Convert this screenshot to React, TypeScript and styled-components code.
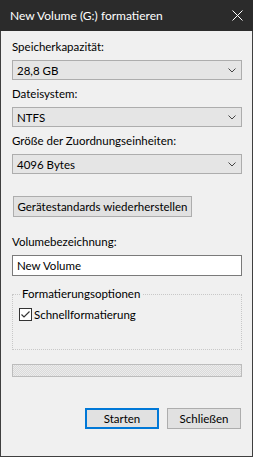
import styled, { createGlobalStyle } from "styled-components";

const GlobalStyle = createGlobalStyle`
  html, body {
    margin: 0;
    padding: 0;
    background: #f0f0f0;
  }
  * {
    box-sizing: border-box;
  }
`;

const Window = styled.div`
  display: flex;
  flex-direction: column;
  width: 253px;
  height: 457px;
  background: #f0f0f0;
  border: 1px solid #3f3f3f;
  border-top: none;
  font-family: "Lato", "Noto Sans", sans-serif;
  font-size: 11.5px;
  color: #000;
`;

const TitleBar = styled.div`
  display: flex;
  align-items: center;
  justify-content: space-between;
  height: 31px;
  margin: 0 -1px;
  padding: 0 10px 1px 10px;
  background: #2b2b2b;
  color: #fff;
  font-size: 12px;
`;

const CloseIcon = styled.svg`
  width: 11px;
  height: 11px;
`;

const Body = styled.div`
  display: flex;
  flex-direction: column;
  padding: 0 10px 0 11px;
`;

const Label = styled.div<{ $top: number }>`
  margin-top: ${(p) => p.$top}px;
  height: 16px;
  line-height: 16px;
  white-space: nowrap;
`;

const Select = styled.div`
  display: flex;
  align-items: center;
  justify-content: space-between;
  margin-top: 5px;
  height: 20px;
  padding: 0 5px 0 4px;
  background: #e5e5e5;
  border: 1px solid #adadad;
`;

const Chevron = styled.svg`
  width: 8px;
  height: 5px;
`;

const Button = styled.div<{ $primary?: boolean }>`
  display: flex;
  align-items: center;
  justify-content: center;
  height: 21px;
  padding: 0 4px;
  background: #e1e1e1;
  border: ${(p) => (p.$primary ? "2px solid #0078d7" : "1px solid #adadad")};
  white-space: nowrap;
`;

const ResetButton = styled(Button)`
  align-self: flex-start;
  margin-top: 22px;
  margin-left: 1px;
  width: 179px;
`;

const TextInput = styled.div`
  display: flex;
  align-items: center;
  margin-top: 5px;
  height: 21px;
  padding: 0 4px;
  background: #fff;
  border: 1px solid #7a7a7a;
`;

const Group = styled.fieldset`
  margin: 11px 0 0 0;
  padding: 6px 6px 0 6px;
  height: 63px;
  border: 1px dotted #c8c8c8;
`;

const Legend = styled.legend`
  padding: 0 2px;
  margin-left: 1px;
  line-height: 14px;
`;

const CheckRow = styled.label`
  display: flex;
  align-items: center;
  gap: 2px;
  height: 14px;
`;

const CheckBox = styled.svg`
  width: 13px;
  height: 13px;
`;

const Progress = styled.div`
  margin-top: 14px;
  height: 13px;
  border: 1px solid #bcbcbc;
  background-color: #e6e6e6;
  background-image: repeating-conic-gradient(#dadada 0% 25%, #ececec 0% 50%);
  background-size: 2px 2px;
`;

const Footer = styled.div`
  display: flex;
  justify-content: flex-end;
  gap: 8px;
  margin-top: 31px;
  padding-right: 1px;
`;

const FooterButton = styled(Button)`
  width: 74px;
`;

export default function App() {
  return (
    <>
      <GlobalStyle />
      <Window>
        <TitleBar>
          <span>New Volume (G:) formatieren</span>
          <CloseIcon viewBox="0 0 11 11">
            <path d="M0.5 0.5 L10.5 10.5 M10.5 0.5 L0.5 10.5" stroke="#fff" strokeWidth="1" fill="none" />
          </CloseIcon>
        </TitleBar>
        <Body>
          <Label $top={8}>Speicherkapazität:</Label>
          <Select>
            <span>28,8 GB</span>
            <Chevron viewBox="0 0 8 5">
              <path d="M0.5 0.5 L4 4 L7.5 0.5" stroke="#444" strokeWidth="1" fill="none" />
            </Chevron>
          </Select>
          <Label $top={6}>Dateisystem:</Label>
          <Select>
            <span>NTFS</span>
            <Chevron viewBox="0 0 8 5">
              <path d="M0.5 0.5 L4 4 L7.5 0.5" stroke="#444" strokeWidth="1" fill="none" />
            </Chevron>
          </Select>
          <Label $top={6}>Größe der Zuordnungseinheiten:</Label>
          <Select>
            <span>4096 Bytes</span>
            <Chevron viewBox="0 0 8 5">
              <path d="M0.5 0.5 L4 4 L7.5 0.5" stroke="#444" strokeWidth="1" fill="none" />
            </Chevron>
          </Select>
          <ResetButton>Gerätestandards wiederherstellen</ResetButton>
          <Label $top={17}>Volumebezeichnung:</Label>
          <TextInput>New Volume</TextInput>
          <Group>
            <Legend>Formatierungsoptionen</Legend>
            <CheckRow>
              <CheckBox viewBox="0 0 13 13">
                <rect x="0.5" y="0.5" width="12" height="12" fill="#fff" stroke="#333" />
                <path d="M2.5 6.5 L5 9 L10.5 3.5" stroke="#333" strokeWidth="1.2" fill="none" />
              </CheckBox>
              <span>Schnellformatierung</span>
            </CheckRow>
          </Group>
          <Progress />
          <Footer>
            <FooterButton $primary>Starten</FooterButton>
            <FooterButton>Schließen</FooterButton>
          </Footer>
        </Body>
      </Window>
    </>
  );
}
